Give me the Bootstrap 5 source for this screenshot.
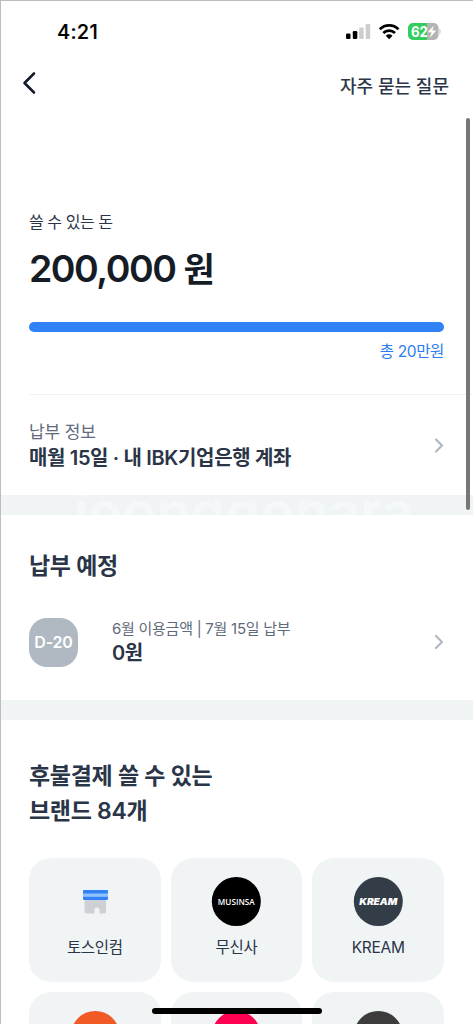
<!DOCTYPE html>
<html lang="ko">
<head>
<meta charset="utf-8">
<meta name="viewport" content="width=device-width, initial-scale=1">
<title>후불결제</title>
<link href="https://cdn.jsdelivr.net/npm/bootstrap@5.3.0/dist/css/bootstrap.min.css" rel="stylesheet">
<style>
  body { font-family: Inter, "Noto Sans CJK KR", sans-serif; color: #2a3547; background: #fff; }
  .screen { height: 1024px; border-top: 1px solid #bdbdbd; border-left: 1px solid #bdbdbd; }
  .status-bar { height: 61px; padding: 0 31px 0 56px; }
  .clock { font-size: 20px; font-weight: 500; line-height: 24px; color: #000; letter-spacing: .3px; -webkit-text-stroke: .2px #000; }
  .top-nav { height: 42px; padding: 0 24px 0 20px; }
  .faq { font-size: 18px; font-weight: 500; line-height: 24px; padding-top: 8px; }
  .balance { height: 290px; padding: 106px 29px 0 28px; }
  .t-label { font-size: 16px; line-height: 24px; letter-spacing: -.45px; }
  .amount { font-size: 37.5px; font-weight: 600; line-height: 48px; color: #151c26; letter-spacing: -1.5px; margin: 11px 0 28px; }
  .amount .won { font-size: 34px; letter-spacing: 0; }
  .limit-bar { height: 10px; border-radius: 5px; --bs-progress-bar-bg: #3182f6; }
  .limit { font-size: 15.5px; line-height: 20px; color: #2b7df0; margin-top: 10px; letter-spacing: -.35px; }
  .pay-info { height: 101px; margin-left: 28px; padding: 25px 29px 0 0; border-top: 1px solid #f1f2f3; }
  .t-sub { font-size: 17px; line-height: 24px; color: #5f6b7c; letter-spacing: -.1px; }
  .t-strong { font-size: 20px; line-height: 28px; font-weight: 600; white-space: nowrap; letter-spacing: -.35px; }
  .band { height: 20px; background: #f0f4f5; }
  .band span { font: 600 56px/58px Inter, sans-serif; color: #f4f8f9; margin: -12px 0 0 73px; letter-spacing: -.15px; }
  .schedule { height: 185px; padding: 34px 29px 0 28px; }
  .heading { font-size: 23px; font-weight: 600; line-height: 35px; margin: 0; letter-spacing: -.3px; }
  .due { margin-top: 33px; }
  .due-text { margin-left: 34px; }
  .dday { width: 49px; height: 49px; border-radius: 18px; background: #b0b8c1; font-size: 16px; font-weight: 600; color: #fff; letter-spacing: -.2px; }
  .t-small { font-size: 15px; line-height: 22px; color: #5f6b7c; white-space: nowrap; letter-spacing: -.26px; padding-top: 1px; }
  .t-small + .t-strong { line-height: 27px; }
  .brands { height: 304px; padding: 39px 29px 0 28px; }
  .brand-grid { display: grid; grid-template-columns: repeat(3, 1fr); gap: 10px; margin-top: 29px; }
  .brand { height: 124px; border-radius: 22px; background: #f0f4f5; padding-top: 19px; font-size: 15.5px; line-height: 24px; }
  .brand svg { width: 50px; height: 50px; }
  .brand-name { margin-top: 9px; letter-spacing: -.3px; }
  .home-bar { left: 151px; top: 1007px; width: 170px; height: 6px; border-radius: 3px; background: #000; }
  .scroll-thumb { left: 465px; top: 117px; width: 4px; height: 392px; border-radius: 2px; background: #777; }
</style>
</head>
<body>
<div class="screen position-relative overflow-hidden">
  <header class="status-bar d-flex align-items-center justify-content-between">
    <div class="clock">4:21</div>
    <div class="d-flex align-items-center">
      <svg width="96" height="20" viewBox="0 0 96 20" aria-hidden="true">
        <rect x="0" y="11.500" width="4.500" height="5.500" rx="1.200"/>
        <rect x="6.800" y="9" width="4.500" height="8" rx="1.200"/>
        <rect x="13.200" y="5.500" width="4.500" height="11.500" rx="1.200" fill="#cdcdcd"/>
        <rect x="19.700" y="2" width="4.500" height="15" rx="1.200" fill="#cdcdcd"/>
        <g fill="none" stroke="#000" stroke-width="2.700">
          <path d="M33.800 7.300a13.200 13.200 0 0 1 18.700 0"/>
          <path d="M37.300 11a8.200 8.200 0 0 1 11.700 0"/>
        </g>
        <path d="M39.800 13.700a4.800 4.800 0 0 1 6.700 0L43.150 17.200z"/>
        <path d="M67 1h14v17H67a5 5 0 0 1-5-5V6a5 5 0 0 1 5-5z" fill="#32cd5b"/>
        <path d="M81 1h6.500a5 5 0 0 1 5 5v7a5 5 0 0 1-5 5H81z" fill="#b4b4b4"/>
        <path d="M93.500 6.500q2 3 0 6z" fill="#b4b4b4"/>
        <text x="65" y="14.800" font-size="14.500" font-weight="700" fill="#fff" textLength="17" lengthAdjust="spacingAndGlyphs">62</text>
        <path d="M87.800 3.500 81.800 10.300h3.700L84 15.700 90.300 8.600h-3.900z" fill="#fff"/>
      </svg>
    </div>
  </header>
  <nav class="top-nav d-flex align-items-center justify-content-between">
    <svg width="16" height="24" viewBox="0 0 16 24" fill="none" stroke="#151c2b" stroke-width="2.600" stroke-linecap="round" stroke-linejoin="round"><path d="M13 2.500 3.500 12 13 21.500"/></svg>
    <div class="faq">자주 묻는 질문</div>
  </nav>
  <section class="balance">
    <div class="t-label">쓸 수 있는 돈</div>
    <div class="amount">200,000 <span class="won">원</span></div>
    <div class="progress limit-bar"><div class="progress-bar w-100"></div></div>
    <div class="limit text-end">총 20만원</div>
  </section>
  <section class="pay-info d-flex justify-content-between">
    <div>
      <div class="t-sub">납부 정보</div>
      <div class="t-strong">매월 15일 · 내 IBK기업은행 계좌</div>
    </div>
    <svg class="mt-3" width="10" height="20" viewBox="0 0 10 20" fill="none" stroke="#b0b8c1" stroke-width="2.200" stroke-linecap="round" stroke-linejoin="round"><path d="M2 3.500 8 9.500 2 15.500"/></svg>
  </section>
  <div class="band overflow-hidden d-flex align-items-start"><span>joonggonara</span></div>
  <section class="schedule">
    <h2 class="heading">납부 예정</h2>
    <div class="d-flex align-items-center due">
      <div class="dday d-flex align-items-center justify-content-center">D-20</div>
      <div class="due-text flex-grow-1">
        <div class="t-small">6월 이용금액 | 7월 15일 납부</div>
        <div class="t-strong">0원</div>
      </div>
      <svg width="10" height="20" viewBox="0 0 10 20" fill="none" stroke="#b0b8c1" stroke-width="2.200" stroke-linecap="round" stroke-linejoin="round"><path d="M2 4 8 10 2 16"/></svg>
    </div>
  </section>
  <div class="band"></div>
  <section class="brands">
    <h2 class="heading">후불결제 쓸 수 있는<br>브랜드 84개</h2>
    <div class="brand-grid text-center">
      <div class="brand">
        <svg viewBox="0 0 50 50"><path d="M14.500 21h21.500v13.500q0 2-2 2h-4.500v-3.500a2.500 2.500 0 0 0-5 0v3.500H16.500q-2 0-2-2z" fill="#cdd1d5"/><rect x="13" y="13" width="25" height="10" rx="1" fill="#3182f6"/><rect x="13" y="16.500" width="25" height="3.300" fill="#90c2ff"/></svg>
        <div class="brand-name">토스인컴</div>
      </div>
      <div class="brand">
        <svg viewBox="0 0 50 50"><circle cx="25.300" cy="24.500" r="24.500"/><text x="6.800" y="28" font-family="Open Sans" font-size="8.500" font-weight="600" fill="#fff" textLength="37" lengthAdjust="spacingAndGlyphs">MUSINSA</text></svg>
        <div class="brand-name">무신사</div>
      </div>
      <div class="brand">
        <svg viewBox="0 0 50 50"><circle cx="25.300" cy="24.500" r="24.500" fill="#333d48"/><text x="6.300" y="28" font-size="9" font-weight="900" font-style="italic" fill="#fff" textLength="38" lengthAdjust="spacingAndGlyphs">KREAM</text></svg>
        <div class="brand-name">KREAM</div>
      </div>
      <div class="brand"><svg viewBox="0 0 50 50"><circle cx="25.300" cy="24.500" r="24.500" fill="#f15a24"/></svg></div>
      <div class="brand"><svg viewBox="0 0 50 50"><circle cx="25.300" cy="24.500" r="24.500" fill="#ff0050"/></svg></div>
      <div class="brand"><svg viewBox="0 0 50 50"><circle cx="25.300" cy="24.500" r="24.500" fill="#3c3c3c"/></svg></div>
    </div>
  </section>
  <div class="scroll-thumb position-absolute"></div>
  <div class="home-bar position-absolute"></div>
</div>
<script src="https://cdn.jsdelivr.net/npm/bootstrap@5.3.0/dist/js/bootstrap.bundle.min.js"></script>
</body>
</html>
